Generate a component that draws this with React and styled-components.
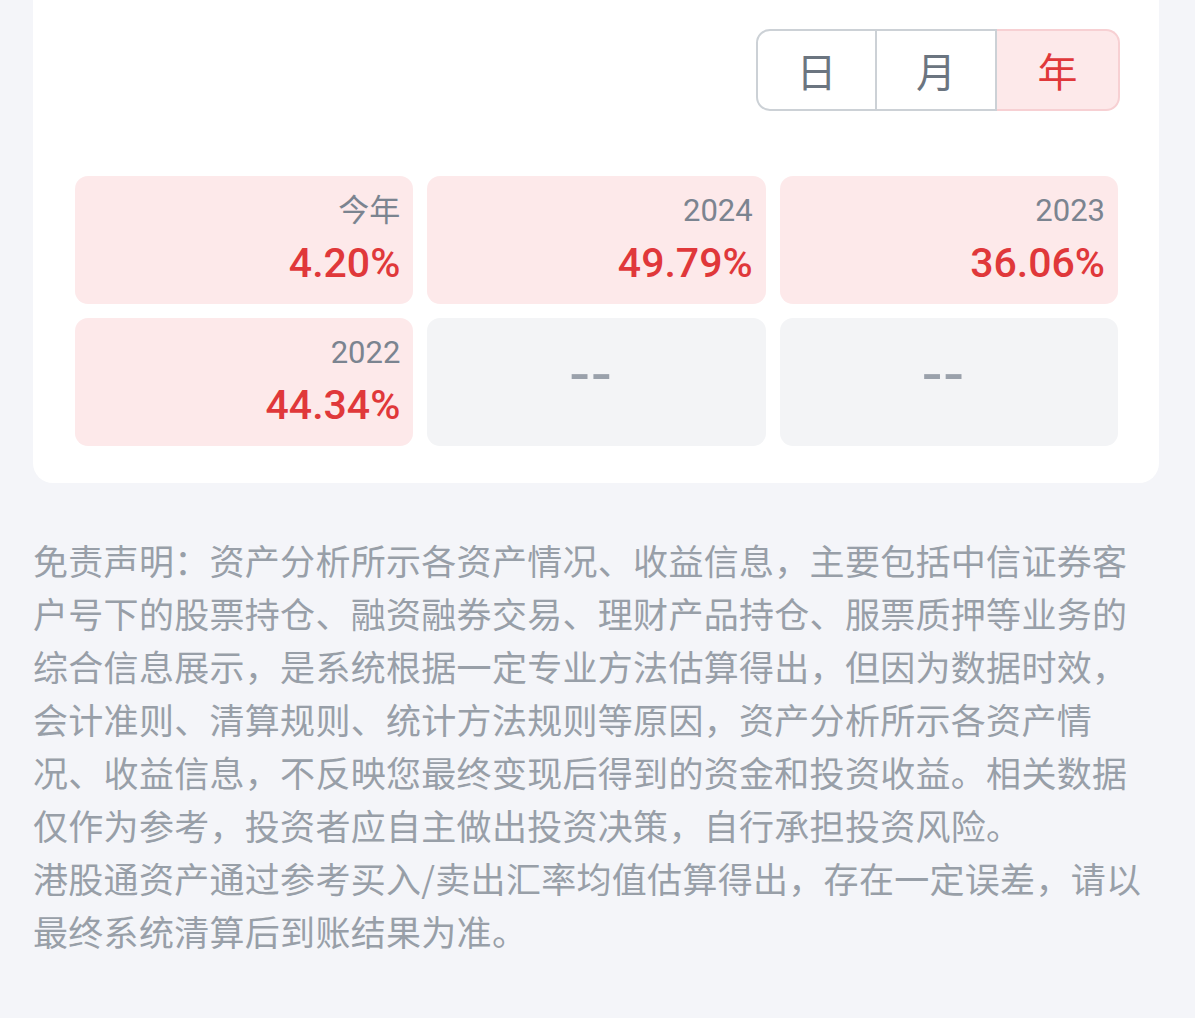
import React from "react";
import styled, { createGlobalStyle } from "styled-components";

const pageBg = "#f4f5f9";
const red = "#e0383a";
const pinkBg = "#fde9ea";
const greyCard = "#f3f4f6";
const labelGrey = "#7b8490";
const noteGrey = "#989fa8";

const cjk = `"Noto Sans CJK SC", "Noto Sans", sans-serif`;
const digits = `Roboto, "Noto Sans CJK SC", sans-serif`;

const Global = createGlobalStyle`
    html, body {
        margin: 0;
        padding: 0;
        background: ${pageBg};
    }
    body {
        font-family: ${cjk};
        min-height: 1018px;
    }
`;

const Page = styled.div`
    padding: 0 36px 0 33px;
    min-height: 1018px;
    box-sizing: border-box;
`;

const Panel = styled.div`
    background: #ffffff;
    border-radius: 0 0 20px 20px;
    padding: 29px 41px 37px 42px;
`;

const ToolRow = styled.div`
    display: flex;
    justify-content: flex-end;
    margin-right: -2px;
    margin-bottom: 65px;
`;

const Segments = styled.div`
    display: flex;
    height: 82px;
`;

const Segment = styled.button`
    width: ${props => props.width}px;
    height: 100%;
    margin: 0;
    padding: 0;
    box-sizing: border-box;
    font-family: ${cjk};
    font-size: 40px;
    line-height: 1;
    color: ${props => props.active ? red : "#6b7580"};
    background: ${props => props.active ? pinkBg : "#ffffff"};
    border: 2px solid ${props => props.active ? "#f7d0d3" : "#ccd1d6"};
    border-left-width: ${props => props.first ? 2 : 0}px;
    border-radius: ${props => props.first ? "14px 0 0 14px" : props.last ? "0 14px 14px 0" : "0"};
    cursor: pointer;
`;

const Grid = styled.div`
    display: grid;
    grid-template-columns: repeat(3, 1fr);
    grid-auto-rows: 128px;
    column-gap: 14px;
    row-gap: 14px;
`;

const Tile = styled.div`
    background: ${props => props.empty ? greyCard : pinkBg};
    border-radius: 13px;
    padding: 15px 13px;
    box-sizing: border-box;
    display: flex;
    flex-direction: column;
    align-items: ${props => props.empty ? "center" : "flex-end"};
    justify-content: ${props => props.empty ? "center" : "flex-start"};
`;

const Label = styled.div`
    font-family: ${digits};
    font-size: 31px;
    line-height: 40px;
    color: ${labelGrey};
`;

const Value = styled.div`
    font-family: ${digits};
    font-size: 41px;
    font-weight: 500;
    line-height: 52px;
    margin-top: 6px;
    color: ${red};
`;

const Dash = styled.div`
    font-family: "DejaVu Sans", sans-serif;
    font-size: 60px;
    line-height: 52px;
    color: #9aa1ab;
    margin: -20px 12px 0 0;
`;

const Notice = styled.div`
    margin-top: 50px;
    padding: 0 9px 0 0;
    font-family: ${cjk};
    font-size: 35px;
    letter-spacing: 0.3px;
    line-height: 53px;
    color: ${noteGrey};
`;

const Para = styled.p`
    margin: 0;
`;

const periods = [
    { key: "day", text: "日", width: 121 },
    { key: "month", text: "月", width: 120 },
    { key: "year", text: "年", width: 123 },
];

const yearly = [
    { label: "今年", value: "4.20%" },
    { label: "2024", value: "49.79%" },
    { label: "2023", value: "36.06%" },
    { label: "2022", value: "44.34%" },
    null,
    null,
];

export default function App() {
    const [period, setPeriod] = React.useState("year");

    return (
        <Page>
            <Global />
            <Panel>
                <ToolRow>
                    <Segments>
                        {periods.map((p, i) => (
                            <Segment
                                key={p.key}
                                width={p.width}
                                first={i === 0}
                                last={i === periods.length - 1}
                                active={period === p.key}
                                onClick={() => setPeriod(p.key)}
                            >
                                {p.text}
                            </Segment>
                        ))}
                    </Segments>
                </ToolRow>
                <Grid>
                    {yearly.map((item, i) => item ? (
                        <Tile key={i}>
                            <Label>{item.label}</Label>
                            <Value>{item.value}</Value>
                        </Tile>
                    ) : (
                        <Tile key={i} empty>
                            <Dash>--</Dash>
                        </Tile>
                    ))}
                </Grid>
            </Panel>
            <Notice>
                <Para>免责声明：资产分析所示各资产情况、收益信息，主要包括中信证券客户号下的股票持仓、融资融券交易、理财产品持仓、服票质押等业务的综合信息展示，是系统根据一定专业方法估算得出，但因为数据时效，会计准则、清算规则、统计方法规则等原因，资产分析所示各资产情况、收益信息，不反映您最终变现后得到的资金和投资收益。相关数据仅作为参考，投资者应自主做出投资决策，自行承担投资风险。</Para>
                <Para>港股通资产通过参考买入/卖出汇率均值估算得出，存在一定误差，请以最终系统清算后到账结果为准。</Para>
            </Notice>
        </Page>
    );
}
